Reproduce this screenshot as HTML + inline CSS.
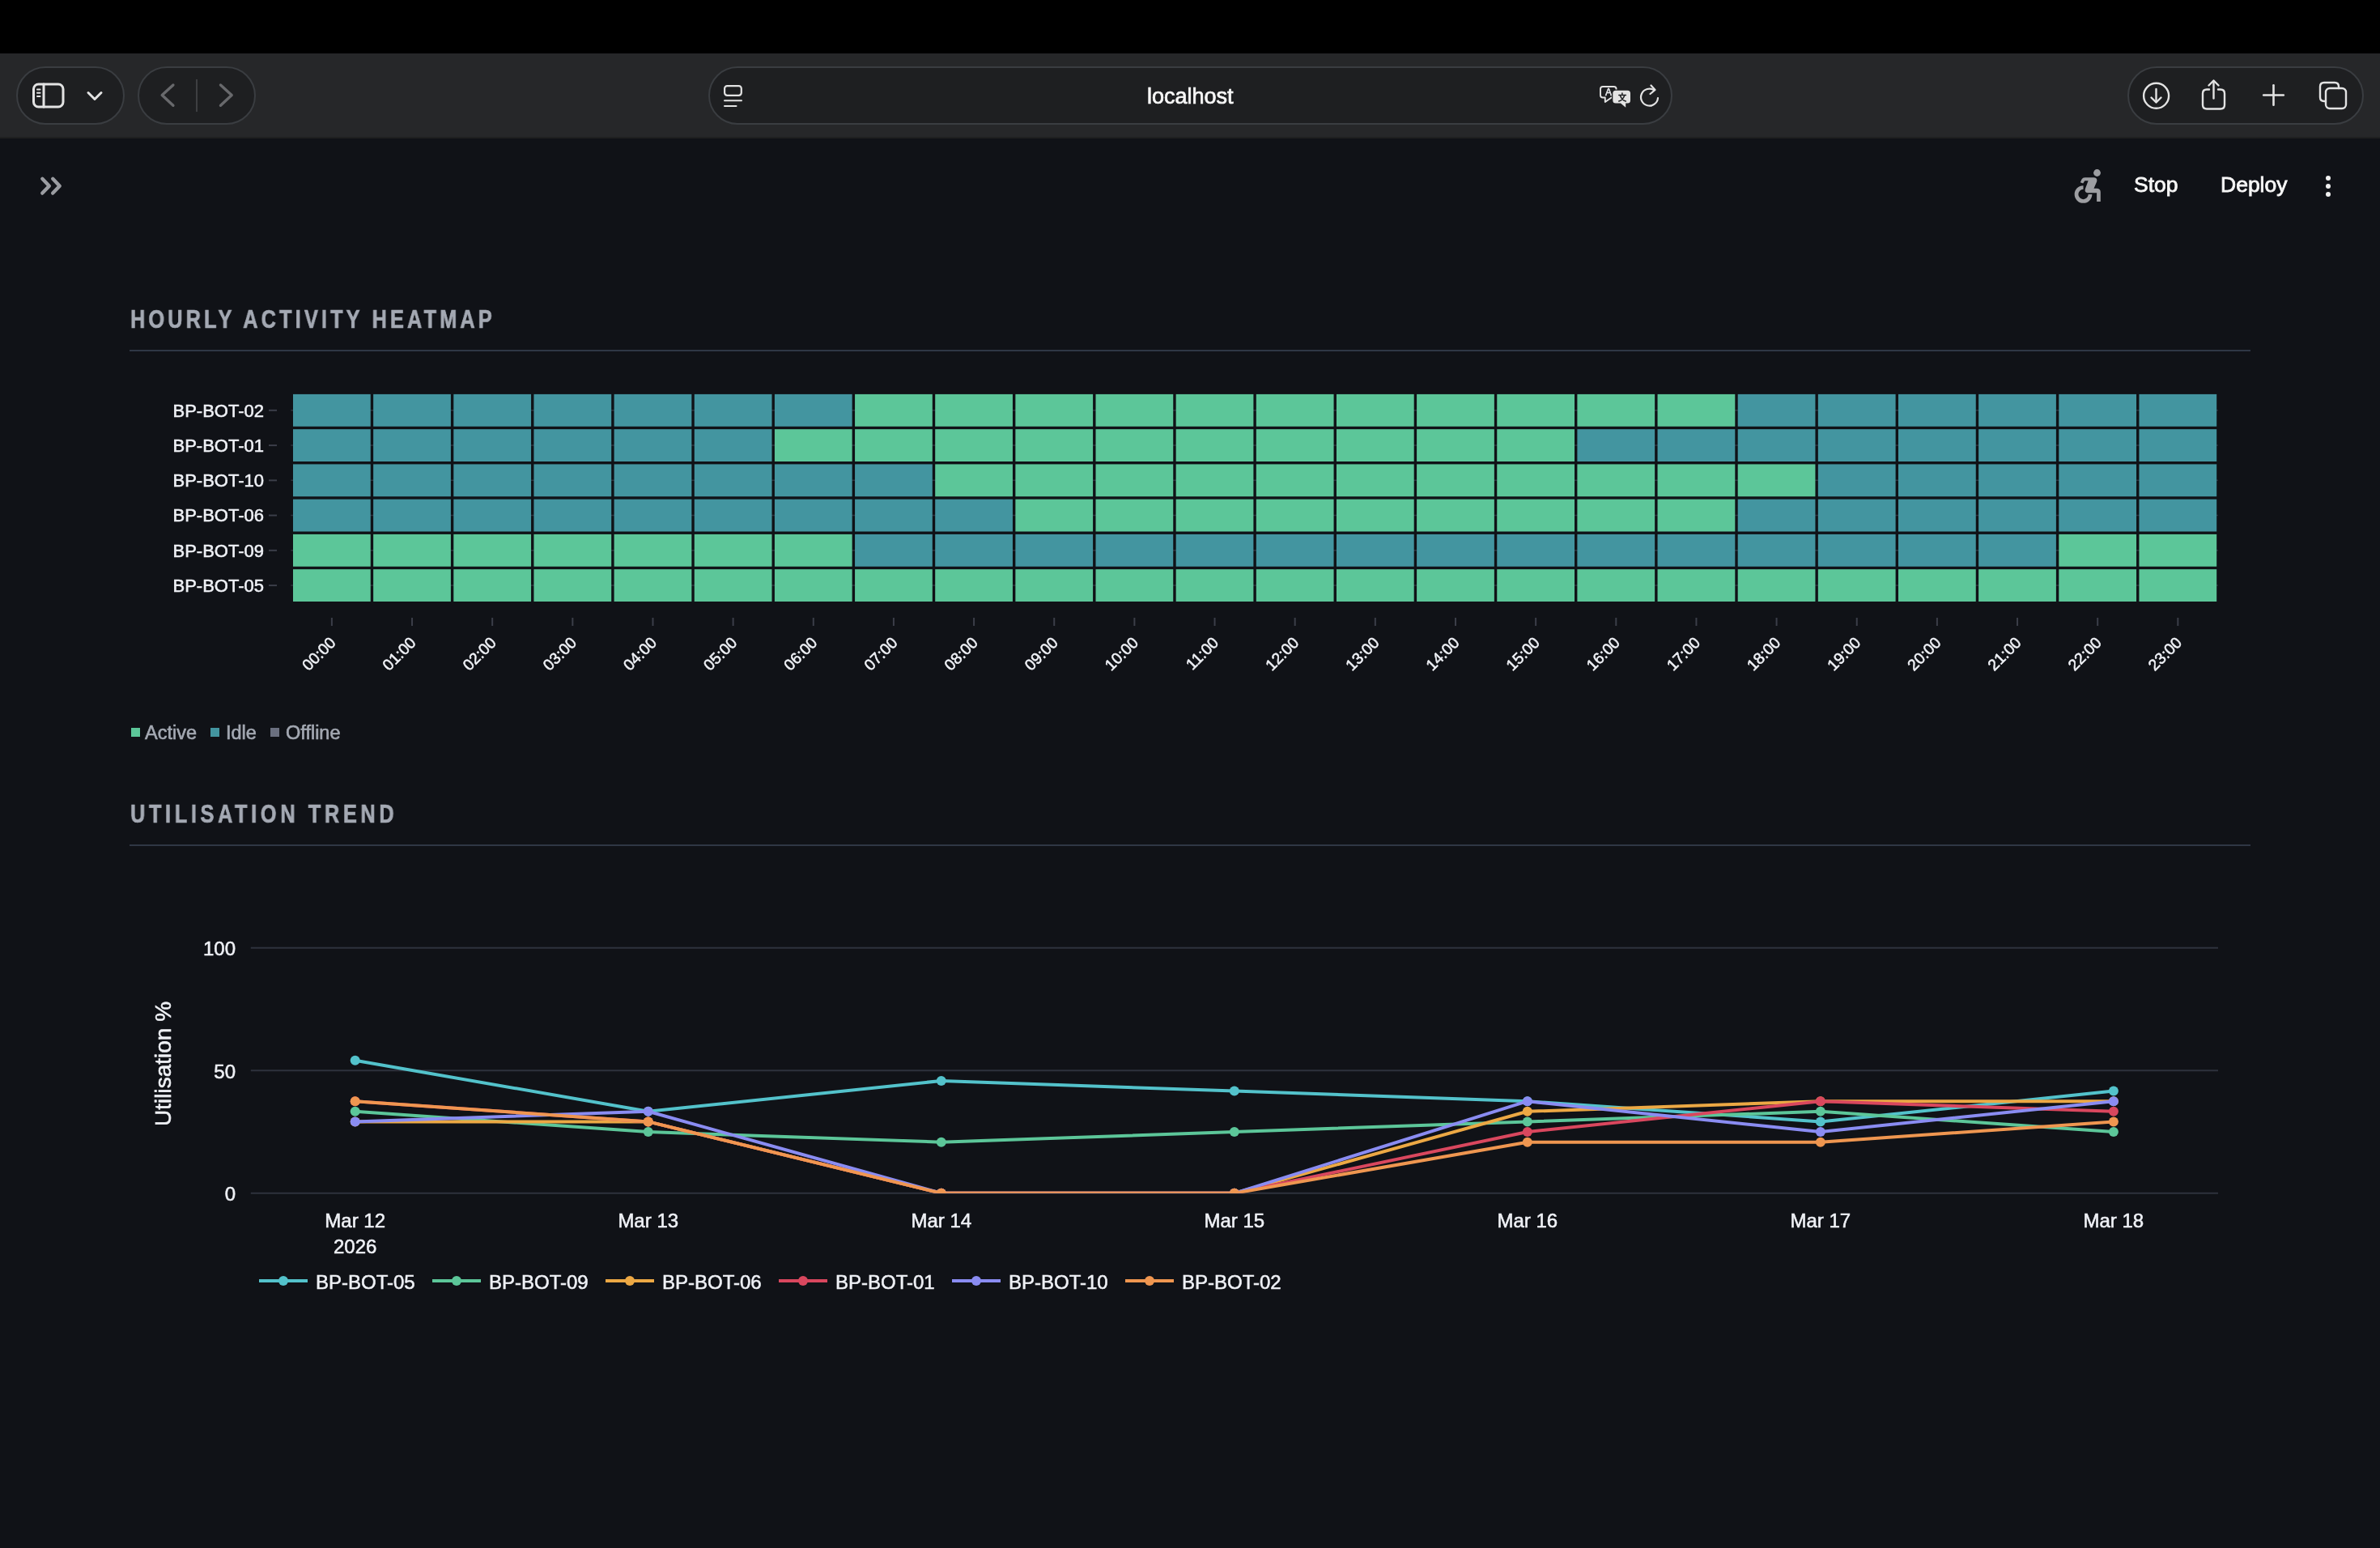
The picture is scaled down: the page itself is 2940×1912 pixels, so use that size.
<!DOCTYPE html><html><head><meta charset="utf-8"><style>
html,body{margin:0;padding:0;width:2940px;height:1912px;overflow:hidden;background:#101217;font-family:"Liberation Sans", sans-serif;}
.abs{position:absolute;will-change:transform;}
.t{position:absolute;white-space:nowrap;line-height:1;will-change:transform;} svg text{stroke:#eff1f6;stroke-width:0.55px;}
</style></head><body>
<div class="abs" style="left:0;top:0;width:2940px;height:66px;background:#000"></div>
<div class="abs" style="left:0;top:66px;width:2940px;height:104px;background:#262729"></div>
<div class="abs" style="left:0;top:168.5px;width:2940px;height:1.5px;background:#1f2021"></div>
<div class="abs" style="left:19.5px;top:81.8px;width:134.0px;height:72.0px;border-radius:36px;background:#1e1f21;box-sizing:border-box;border:2px solid #3a3d41"></div>
<div class="abs" style="left:169.5px;top:81.8px;width:146.0px;height:72.0px;border-radius:36px;background:#1e1f21;box-sizing:border-box;border:2px solid #3a3d41"></div>
<div class="abs" style="left:875.0px;top:81.8px;width:1190.5px;height:72.0px;border-radius:36px;background:#1e1f21;box-sizing:border-box;border:2px solid #3a3d41"></div>
<div class="abs" style="left:2627.8px;top:81.8px;width:292.2px;height:72.0px;border-radius:36px;background:#1e1f21;box-sizing:border-box;border:2px solid #3a3d41"></div>
<svg class="abs" style="left:0;top:0" width="2940" height="170" viewBox="0 0 2940 170" fill="none" stroke-linecap="round" stroke-linejoin="round"><rect x="41.5" y="104" width="36.5" height="28" rx="6" stroke="#e3e3e3" stroke-width="3"/><line x1="54" y1="104" x2="54" y2="132" stroke="#e3e3e3" stroke-width="3"/><line x1="46" y1="110.5" x2="49.5" y2="110.5" stroke="#e3e3e3" stroke-width="2"/><line x1="46" y1="114.7" x2="49.5" y2="114.7" stroke="#e3e3e3" stroke-width="2"/><line x1="46" y1="118.9" x2="49.5" y2="118.9" stroke="#e3e3e3" stroke-width="2"/><polyline points="109,114.5 117,122.5 125,114.5" stroke="#e3e3e3" stroke-width="3"/><polyline points="213.9,105 200.2,117.6 213.9,130.3" stroke="#68696c" stroke-width="3.4"/><line x1="243" y1="98.5" x2="243" y2="137.5" stroke="#4a4b4e" stroke-width="1.5"/><polyline points="272.5,105 286.2,117.6 272.5,130.3" stroke="#68696c" stroke-width="3.4"/><rect x="895.1" y="106.1" width="20.7" height="11.7" rx="3.2" stroke="#e3e3e3" stroke-width="2.2"/><line x1="895" y1="124.3" x2="916" y2="124.3" stroke="#e3e3e3" stroke-width="2"/><line x1="895" y1="131" x2="909.5" y2="131" stroke="#e3e3e3" stroke-width="2"/><path d="M1980 107 h13.6 q3 0 3 3 v7.5 q0 3-3 3 h-3 l-7.8 5.5 v-5.5 h-2.8 q-3 0-3-3 v-7.5 q0-3 3-3 z" stroke="#e3e3e3" stroke-width="1.9"/><text x="1983" y="118.2" font-family='Liberation Sans' font-size="12" fill="#e3e3e3" stroke="none">A</text><path d="M1995.8 111.8 h14.7 q3.5 0 3.5 3.5 v8.6 q0 3.5-3.5 3.5 h-2.3 v5.4 l-6.2-5.4 h-6.2 q-3.5 0-3.5-3.5 v-8.6 q0-3.5 3.5-3.5 z" fill="#e3e3e3" stroke="#1e1f21" stroke-width="2.6" style="paint-order:stroke"/><path d="M1999.8 117.6 h8.6 M2003.9 114.9 v1.6 M2001.5 118.2 q1.8 5.2 6.8 6.8 M2006.6 118.2 q-1.8 5.2-6.8 6.8" stroke="#1e1f21" stroke-width="1.5"/><path d="M2048 121 a10.5 10.5 0 1 1 -4.5 -9.5" stroke="#e3e3e3" stroke-width="2.2"/><polyline points="2039.5,105.5 2044.5,111 2038.5,116" stroke="#e3e3e3" stroke-width="2.2"/><circle cx="2663.6" cy="118.3" r="15.5" stroke="#e3e3e3" stroke-width="2.4"/><line x1="2663.5" y1="110" x2="2663.5" y2="126" stroke="#e3e3e3" stroke-width="2.4"/><polyline points="2657.5,120.5 2663.5,126.5 2669.5,120.5" stroke="#e3e3e3" stroke-width="2.4"/><path d="M2729 110.5 h-3 q-5 0-5 5 v14 q0 5 5 5 h17 q5 0 5-5 v-14 q0-5-5-5 h-3" stroke="#e3e3e3" stroke-width="2.4"/><line x1="2734.5" y1="100" x2="2734.5" y2="121.5" stroke="#e3e3e3" stroke-width="2.4"/><polyline points="2728.5,105.5 2734.5,99.5 2740.5,105.5" stroke="#e3e3e3" stroke-width="2.4"/><line x1="2808.5" y1="105.2" x2="2808.5" y2="129.8" stroke="#e3e3e3" stroke-width="2.6"/><line x1="2796.2" y1="117.5" x2="2820.8" y2="117.5" stroke="#e3e3e3" stroke-width="2.6"/><path d="M2873 125 h-2 q-5 0-5-5 v-13 q0-5 5-5 h13 q5 0 5 5 v2" stroke="#e3e3e3" stroke-width="2.4"/><rect x="2873" y="109" width="25" height="25" rx="5" stroke="#e3e3e3" stroke-width="2.4"/></svg>
<div class="t" style="left:1417px;top:106px;font-size:27px;color:#f7f7f7;-webkit-text-stroke:0.7px #f7f7f7">localhost</div>
<svg class="abs" style="left:0;top:170px" width="2940" height="100" viewBox="0 170 2940 100" fill="none" stroke-linecap="round" stroke-linejoin="round">
<polyline points="52.3,220.8 60.8,229.7 52.3,238.6" stroke="#9a9ca1" stroke-width="4.4"/>
<polyline points="65.2,220.8 73.7,229.7 65.2,238.6" stroke="#9a9ca1" stroke-width="4.4"/>
<circle cx="2590.5" cy="213.5" r="4.4" fill="#9d9ea2"/>
<path d="M2569.8 225.2 L2571.5 221.5 Q2572.7 219.2 2575.5 219.2 L2586.8 219.2 Q2591.2 219.6 2590.2 224.2 L2586.5 232.8 L2590.8 232.8 Q2594.8 233.3 2594.8 237.5 L2594.8 249 L2590.1 249 L2590.1 238.2 L2578.8 238.2 Q2574.8 237.8 2575.8 233.5 L2579.6 223.2 L2575.3 223.2 L2573.2 226.6 Z" fill="#9d9ea2" stroke="none"/>
<path d="M2573.5 231.5 A8.5 8.5 0 1 0 2582 240" stroke="#9d9ea2" stroke-width="4.7" stroke-linecap="butt"/>
<circle cx="2876" cy="220" r="3" fill="#f0f0f0"/>
<circle cx="2876" cy="230" r="3" fill="#f0f0f0"/>
<circle cx="2876" cy="240" r="3" fill="#f0f0f0"/>
</svg>
<div class="t" style="left:2636px;top:215px;font-size:26.5px;color:#f7f7f7;-webkit-text-stroke:0.8px #f7f7f7">Stop</div>
<div class="t" style="left:2743px;top:215px;font-size:26.5px;color:#f7f7f7;-webkit-text-stroke:0.8px #f7f7f7">Deploy</div>
<div class="t" style="left:161px;top:379px;font-size:30.5px;font-weight:bold;letter-spacing:5px;transform:scaleX(0.83);transform-origin:0 0;-webkit-text-stroke:0.7px #a4a9b3;color:#a4a9b3">HOURLY ACTIVITY HEATMAP</div>
<div class="abs" style="left:160px;top:432px;width:2620px;height:2px;background:#2f3745"></div>
<div class="t" style="left:161px;top:990px;font-size:30.5px;font-weight:bold;letter-spacing:5.6px;transform:scaleX(0.83);transform-origin:0 0;-webkit-text-stroke:0.7px #a4a9b3;color:#a4a9b3">UTILISATION TREND</div>
<div class="abs" style="left:160px;top:1043px;width:2620px;height:2px;background:#2f3745"></div>
<svg class="abs" style="left:0;top:0" width="2940" height="900" viewBox="0 0 2940 900"><line x1="359.3" y1="506.82" x2="2739.9" y2="506.82" stroke="#2e323d" stroke-width="1.5"/><line x1="359.3" y1="550.08" x2="2739.9" y2="550.08" stroke="#2e323d" stroke-width="1.5"/><line x1="359.3" y1="593.33" x2="2739.9" y2="593.33" stroke="#2e323d" stroke-width="1.5"/><line x1="359.3" y1="636.58" x2="2739.9" y2="636.58" stroke="#2e323d" stroke-width="1.5"/><line x1="359.3" y1="679.83" x2="2739.9" y2="679.83" stroke="#2e323d" stroke-width="1.5"/><line x1="359.3" y1="723.08" x2="2739.9" y2="723.08" stroke="#2e323d" stroke-width="1.5"/><rect x="362.00" y="486.90" width="95.75" height="39.85" fill="#4395a0"/><rect x="461.15" y="486.90" width="95.75" height="39.85" fill="#4395a0"/><rect x="560.30" y="486.90" width="95.75" height="39.85" fill="#4395a0"/><rect x="659.45" y="486.90" width="95.75" height="39.85" fill="#4395a0"/><rect x="758.60" y="486.90" width="95.75" height="39.85" fill="#4395a0"/><rect x="857.75" y="486.90" width="95.75" height="39.85" fill="#4395a0"/><rect x="956.90" y="486.90" width="95.75" height="39.85" fill="#4395a0"/><rect x="1056.05" y="486.90" width="95.75" height="39.85" fill="#5cc699"/><rect x="1155.20" y="486.90" width="95.75" height="39.85" fill="#5cc699"/><rect x="1254.35" y="486.90" width="95.75" height="39.85" fill="#5cc699"/><rect x="1353.50" y="486.90" width="95.75" height="39.85" fill="#5cc699"/><rect x="1452.65" y="486.90" width="95.75" height="39.85" fill="#5cc699"/><rect x="1551.80" y="486.90" width="95.75" height="39.85" fill="#5cc699"/><rect x="1650.95" y="486.90" width="95.75" height="39.85" fill="#5cc699"/><rect x="1750.10" y="486.90" width="95.75" height="39.85" fill="#5cc699"/><rect x="1849.25" y="486.90" width="95.75" height="39.85" fill="#5cc699"/><rect x="1948.40" y="486.90" width="95.75" height="39.85" fill="#5cc699"/><rect x="2047.55" y="486.90" width="95.75" height="39.85" fill="#5cc699"/><rect x="2146.70" y="486.90" width="95.75" height="39.85" fill="#4395a0"/><rect x="2245.85" y="486.90" width="95.75" height="39.85" fill="#4395a0"/><rect x="2345.00" y="486.90" width="95.75" height="39.85" fill="#4395a0"/><rect x="2444.15" y="486.90" width="95.75" height="39.85" fill="#4395a0"/><rect x="2543.30" y="486.90" width="95.75" height="39.85" fill="#4395a0"/><rect x="2642.45" y="486.90" width="95.75" height="39.85" fill="#4395a0"/><rect x="362.00" y="530.15" width="95.75" height="39.85" fill="#4395a0"/><rect x="461.15" y="530.15" width="95.75" height="39.85" fill="#4395a0"/><rect x="560.30" y="530.15" width="95.75" height="39.85" fill="#4395a0"/><rect x="659.45" y="530.15" width="95.75" height="39.85" fill="#4395a0"/><rect x="758.60" y="530.15" width="95.75" height="39.85" fill="#4395a0"/><rect x="857.75" y="530.15" width="95.75" height="39.85" fill="#4395a0"/><rect x="956.90" y="530.15" width="95.75" height="39.85" fill="#5cc699"/><rect x="1056.05" y="530.15" width="95.75" height="39.85" fill="#5cc699"/><rect x="1155.20" y="530.15" width="95.75" height="39.85" fill="#5cc699"/><rect x="1254.35" y="530.15" width="95.75" height="39.85" fill="#5cc699"/><rect x="1353.50" y="530.15" width="95.75" height="39.85" fill="#5cc699"/><rect x="1452.65" y="530.15" width="95.75" height="39.85" fill="#5cc699"/><rect x="1551.80" y="530.15" width="95.75" height="39.85" fill="#5cc699"/><rect x="1650.95" y="530.15" width="95.75" height="39.85" fill="#5cc699"/><rect x="1750.10" y="530.15" width="95.75" height="39.85" fill="#5cc699"/><rect x="1849.25" y="530.15" width="95.75" height="39.85" fill="#5cc699"/><rect x="1948.40" y="530.15" width="95.75" height="39.85" fill="#4395a0"/><rect x="2047.55" y="530.15" width="95.75" height="39.85" fill="#4395a0"/><rect x="2146.70" y="530.15" width="95.75" height="39.85" fill="#4395a0"/><rect x="2245.85" y="530.15" width="95.75" height="39.85" fill="#4395a0"/><rect x="2345.00" y="530.15" width="95.75" height="39.85" fill="#4395a0"/><rect x="2444.15" y="530.15" width="95.75" height="39.85" fill="#4395a0"/><rect x="2543.30" y="530.15" width="95.75" height="39.85" fill="#4395a0"/><rect x="2642.45" y="530.15" width="95.75" height="39.85" fill="#4395a0"/><rect x="362.00" y="573.40" width="95.75" height="39.85" fill="#4395a0"/><rect x="461.15" y="573.40" width="95.75" height="39.85" fill="#4395a0"/><rect x="560.30" y="573.40" width="95.75" height="39.85" fill="#4395a0"/><rect x="659.45" y="573.40" width="95.75" height="39.85" fill="#4395a0"/><rect x="758.60" y="573.40" width="95.75" height="39.85" fill="#4395a0"/><rect x="857.75" y="573.40" width="95.75" height="39.85" fill="#4395a0"/><rect x="956.90" y="573.40" width="95.75" height="39.85" fill="#4395a0"/><rect x="1056.05" y="573.40" width="95.75" height="39.85" fill="#4395a0"/><rect x="1155.20" y="573.40" width="95.75" height="39.85" fill="#5cc699"/><rect x="1254.35" y="573.40" width="95.75" height="39.85" fill="#5cc699"/><rect x="1353.50" y="573.40" width="95.75" height="39.85" fill="#5cc699"/><rect x="1452.65" y="573.40" width="95.75" height="39.85" fill="#5cc699"/><rect x="1551.80" y="573.40" width="95.75" height="39.85" fill="#5cc699"/><rect x="1650.95" y="573.40" width="95.75" height="39.85" fill="#5cc699"/><rect x="1750.10" y="573.40" width="95.75" height="39.85" fill="#5cc699"/><rect x="1849.25" y="573.40" width="95.75" height="39.85" fill="#5cc699"/><rect x="1948.40" y="573.40" width="95.75" height="39.85" fill="#5cc699"/><rect x="2047.55" y="573.40" width="95.75" height="39.85" fill="#5cc699"/><rect x="2146.70" y="573.40" width="95.75" height="39.85" fill="#5cc699"/><rect x="2245.85" y="573.40" width="95.75" height="39.85" fill="#4395a0"/><rect x="2345.00" y="573.40" width="95.75" height="39.85" fill="#4395a0"/><rect x="2444.15" y="573.40" width="95.75" height="39.85" fill="#4395a0"/><rect x="2543.30" y="573.40" width="95.75" height="39.85" fill="#4395a0"/><rect x="2642.45" y="573.40" width="95.75" height="39.85" fill="#4395a0"/><rect x="362.00" y="616.65" width="95.75" height="39.85" fill="#4395a0"/><rect x="461.15" y="616.65" width="95.75" height="39.85" fill="#4395a0"/><rect x="560.30" y="616.65" width="95.75" height="39.85" fill="#4395a0"/><rect x="659.45" y="616.65" width="95.75" height="39.85" fill="#4395a0"/><rect x="758.60" y="616.65" width="95.75" height="39.85" fill="#4395a0"/><rect x="857.75" y="616.65" width="95.75" height="39.85" fill="#4395a0"/><rect x="956.90" y="616.65" width="95.75" height="39.85" fill="#4395a0"/><rect x="1056.05" y="616.65" width="95.75" height="39.85" fill="#4395a0"/><rect x="1155.20" y="616.65" width="95.75" height="39.85" fill="#4395a0"/><rect x="1254.35" y="616.65" width="95.75" height="39.85" fill="#5cc699"/><rect x="1353.50" y="616.65" width="95.75" height="39.85" fill="#5cc699"/><rect x="1452.65" y="616.65" width="95.75" height="39.85" fill="#5cc699"/><rect x="1551.80" y="616.65" width="95.75" height="39.85" fill="#5cc699"/><rect x="1650.95" y="616.65" width="95.75" height="39.85" fill="#5cc699"/><rect x="1750.10" y="616.65" width="95.75" height="39.85" fill="#5cc699"/><rect x="1849.25" y="616.65" width="95.75" height="39.85" fill="#5cc699"/><rect x="1948.40" y="616.65" width="95.75" height="39.85" fill="#5cc699"/><rect x="2047.55" y="616.65" width="95.75" height="39.85" fill="#5cc699"/><rect x="2146.70" y="616.65" width="95.75" height="39.85" fill="#4395a0"/><rect x="2245.85" y="616.65" width="95.75" height="39.85" fill="#4395a0"/><rect x="2345.00" y="616.65" width="95.75" height="39.85" fill="#4395a0"/><rect x="2444.15" y="616.65" width="95.75" height="39.85" fill="#4395a0"/><rect x="2543.30" y="616.65" width="95.75" height="39.85" fill="#4395a0"/><rect x="2642.45" y="616.65" width="95.75" height="39.85" fill="#4395a0"/><rect x="362.00" y="659.90" width="95.75" height="39.85" fill="#5cc699"/><rect x="461.15" y="659.90" width="95.75" height="39.85" fill="#5cc699"/><rect x="560.30" y="659.90" width="95.75" height="39.85" fill="#5cc699"/><rect x="659.45" y="659.90" width="95.75" height="39.85" fill="#5cc699"/><rect x="758.60" y="659.90" width="95.75" height="39.85" fill="#5cc699"/><rect x="857.75" y="659.90" width="95.75" height="39.85" fill="#5cc699"/><rect x="956.90" y="659.90" width="95.75" height="39.85" fill="#5cc699"/><rect x="1056.05" y="659.90" width="95.75" height="39.85" fill="#4395a0"/><rect x="1155.20" y="659.90" width="95.75" height="39.85" fill="#4395a0"/><rect x="1254.35" y="659.90" width="95.75" height="39.85" fill="#4395a0"/><rect x="1353.50" y="659.90" width="95.75" height="39.85" fill="#4395a0"/><rect x="1452.65" y="659.90" width="95.75" height="39.85" fill="#4395a0"/><rect x="1551.80" y="659.90" width="95.75" height="39.85" fill="#4395a0"/><rect x="1650.95" y="659.90" width="95.75" height="39.85" fill="#4395a0"/><rect x="1750.10" y="659.90" width="95.75" height="39.85" fill="#4395a0"/><rect x="1849.25" y="659.90" width="95.75" height="39.85" fill="#4395a0"/><rect x="1948.40" y="659.90" width="95.75" height="39.85" fill="#4395a0"/><rect x="2047.55" y="659.90" width="95.75" height="39.85" fill="#4395a0"/><rect x="2146.70" y="659.90" width="95.75" height="39.85" fill="#4395a0"/><rect x="2245.85" y="659.90" width="95.75" height="39.85" fill="#4395a0"/><rect x="2345.00" y="659.90" width="95.75" height="39.85" fill="#4395a0"/><rect x="2444.15" y="659.90" width="95.75" height="39.85" fill="#4395a0"/><rect x="2543.30" y="659.90" width="95.75" height="39.85" fill="#5cc699"/><rect x="2642.45" y="659.90" width="95.75" height="39.85" fill="#5cc699"/><rect x="362.00" y="703.15" width="95.75" height="39.85" fill="#5cc699"/><rect x="461.15" y="703.15" width="95.75" height="39.85" fill="#5cc699"/><rect x="560.30" y="703.15" width="95.75" height="39.85" fill="#5cc699"/><rect x="659.45" y="703.15" width="95.75" height="39.85" fill="#5cc699"/><rect x="758.60" y="703.15" width="95.75" height="39.85" fill="#5cc699"/><rect x="857.75" y="703.15" width="95.75" height="39.85" fill="#5cc699"/><rect x="956.90" y="703.15" width="95.75" height="39.85" fill="#5cc699"/><rect x="1056.05" y="703.15" width="95.75" height="39.85" fill="#5cc699"/><rect x="1155.20" y="703.15" width="95.75" height="39.85" fill="#5cc699"/><rect x="1254.35" y="703.15" width="95.75" height="39.85" fill="#5cc699"/><rect x="1353.50" y="703.15" width="95.75" height="39.85" fill="#5cc699"/><rect x="1452.65" y="703.15" width="95.75" height="39.85" fill="#5cc699"/><rect x="1551.80" y="703.15" width="95.75" height="39.85" fill="#5cc699"/><rect x="1650.95" y="703.15" width="95.75" height="39.85" fill="#5cc699"/><rect x="1750.10" y="703.15" width="95.75" height="39.85" fill="#5cc699"/><rect x="1849.25" y="703.15" width="95.75" height="39.85" fill="#5cc699"/><rect x="1948.40" y="703.15" width="95.75" height="39.85" fill="#5cc699"/><rect x="2047.55" y="703.15" width="95.75" height="39.85" fill="#5cc699"/><rect x="2146.70" y="703.15" width="95.75" height="39.85" fill="#5cc699"/><rect x="2245.85" y="703.15" width="95.75" height="39.85" fill="#5cc699"/><rect x="2345.00" y="703.15" width="95.75" height="39.85" fill="#5cc699"/><rect x="2444.15" y="703.15" width="95.75" height="39.85" fill="#5cc699"/><rect x="2543.30" y="703.15" width="95.75" height="39.85" fill="#5cc699"/><rect x="2642.45" y="703.15" width="95.75" height="39.85" fill="#5cc699"/><line x1="332" y1="506.82" x2="342" y2="506.82" stroke="#3b3e49" stroke-width="2"/><text x="326" y="514.62" text-anchor="end" font-family='Liberation Sans' font-size="22" fill="#eff1f6">BP-BOT-02</text><line x1="332" y1="550.08" x2="342" y2="550.08" stroke="#3b3e49" stroke-width="2"/><text x="326" y="557.88" text-anchor="end" font-family='Liberation Sans' font-size="22" fill="#eff1f6">BP-BOT-01</text><line x1="332" y1="593.33" x2="342" y2="593.33" stroke="#3b3e49" stroke-width="2"/><text x="326" y="601.12" text-anchor="end" font-family='Liberation Sans' font-size="22" fill="#eff1f6">BP-BOT-10</text><line x1="332" y1="636.58" x2="342" y2="636.58" stroke="#3b3e49" stroke-width="2"/><text x="326" y="644.38" text-anchor="end" font-family='Liberation Sans' font-size="22" fill="#eff1f6">BP-BOT-06</text><line x1="332" y1="679.83" x2="342" y2="679.83" stroke="#3b3e49" stroke-width="2"/><text x="326" y="687.62" text-anchor="end" font-family='Liberation Sans' font-size="22" fill="#eff1f6">BP-BOT-09</text><line x1="332" y1="723.08" x2="342" y2="723.08" stroke="#3b3e49" stroke-width="2"/><text x="326" y="730.88" text-anchor="end" font-family='Liberation Sans' font-size="22" fill="#eff1f6">BP-BOT-05</text><line x1="409.88" y1="763" x2="409.88" y2="773" stroke="#3b3e49" stroke-width="2"/><text x="415.88" y="795.00" text-anchor="end" transform="rotate(-45 415.88 795.00)" font-family='Liberation Sans' font-size="19.5" fill="#eff1f6">00:00</text><line x1="509.03" y1="763" x2="509.03" y2="773" stroke="#3b3e49" stroke-width="2"/><text x="515.03" y="795.00" text-anchor="end" transform="rotate(-45 515.03 795.00)" font-family='Liberation Sans' font-size="19.5" fill="#eff1f6">01:00</text><line x1="608.17" y1="763" x2="608.17" y2="773" stroke="#3b3e49" stroke-width="2"/><text x="614.17" y="795.00" text-anchor="end" transform="rotate(-45 614.17 795.00)" font-family='Liberation Sans' font-size="19.5" fill="#eff1f6">02:00</text><line x1="707.33" y1="763" x2="707.33" y2="773" stroke="#3b3e49" stroke-width="2"/><text x="713.33" y="795.00" text-anchor="end" transform="rotate(-45 713.33 795.00)" font-family='Liberation Sans' font-size="19.5" fill="#eff1f6">03:00</text><line x1="806.48" y1="763" x2="806.48" y2="773" stroke="#3b3e49" stroke-width="2"/><text x="812.48" y="795.00" text-anchor="end" transform="rotate(-45 812.48 795.00)" font-family='Liberation Sans' font-size="19.5" fill="#eff1f6">04:00</text><line x1="905.62" y1="763" x2="905.62" y2="773" stroke="#3b3e49" stroke-width="2"/><text x="911.62" y="795.00" text-anchor="end" transform="rotate(-45 911.62 795.00)" font-family='Liberation Sans' font-size="19.5" fill="#eff1f6">05:00</text><line x1="1004.78" y1="763" x2="1004.78" y2="773" stroke="#3b3e49" stroke-width="2"/><text x="1010.78" y="795.00" text-anchor="end" transform="rotate(-45 1010.78 795.00)" font-family='Liberation Sans' font-size="19.5" fill="#eff1f6">06:00</text><line x1="1103.92" y1="763" x2="1103.92" y2="773" stroke="#3b3e49" stroke-width="2"/><text x="1109.92" y="795.00" text-anchor="end" transform="rotate(-45 1109.92 795.00)" font-family='Liberation Sans' font-size="19.5" fill="#eff1f6">07:00</text><line x1="1203.08" y1="763" x2="1203.08" y2="773" stroke="#3b3e49" stroke-width="2"/><text x="1209.08" y="795.00" text-anchor="end" transform="rotate(-45 1209.08 795.00)" font-family='Liberation Sans' font-size="19.5" fill="#eff1f6">08:00</text><line x1="1302.23" y1="763" x2="1302.23" y2="773" stroke="#3b3e49" stroke-width="2"/><text x="1308.23" y="795.00" text-anchor="end" transform="rotate(-45 1308.23 795.00)" font-family='Liberation Sans' font-size="19.5" fill="#eff1f6">09:00</text><line x1="1401.38" y1="763" x2="1401.38" y2="773" stroke="#3b3e49" stroke-width="2"/><text x="1407.38" y="795.00" text-anchor="end" transform="rotate(-45 1407.38 795.00)" font-family='Liberation Sans' font-size="19.5" fill="#eff1f6">10:00</text><line x1="1500.53" y1="763" x2="1500.53" y2="773" stroke="#3b3e49" stroke-width="2"/><text x="1506.53" y="795.00" text-anchor="end" transform="rotate(-45 1506.53 795.00)" font-family='Liberation Sans' font-size="19.5" fill="#eff1f6">11:00</text><line x1="1599.67" y1="763" x2="1599.67" y2="773" stroke="#3b3e49" stroke-width="2"/><text x="1605.67" y="795.00" text-anchor="end" transform="rotate(-45 1605.67 795.00)" font-family='Liberation Sans' font-size="19.5" fill="#eff1f6">12:00</text><line x1="1698.83" y1="763" x2="1698.83" y2="773" stroke="#3b3e49" stroke-width="2"/><text x="1704.83" y="795.00" text-anchor="end" transform="rotate(-45 1704.83 795.00)" font-family='Liberation Sans' font-size="19.5" fill="#eff1f6">13:00</text><line x1="1797.98" y1="763" x2="1797.98" y2="773" stroke="#3b3e49" stroke-width="2"/><text x="1803.98" y="795.00" text-anchor="end" transform="rotate(-45 1803.98 795.00)" font-family='Liberation Sans' font-size="19.5" fill="#eff1f6">14:00</text><line x1="1897.12" y1="763" x2="1897.12" y2="773" stroke="#3b3e49" stroke-width="2"/><text x="1903.12" y="795.00" text-anchor="end" transform="rotate(-45 1903.12 795.00)" font-family='Liberation Sans' font-size="19.5" fill="#eff1f6">15:00</text><line x1="1996.28" y1="763" x2="1996.28" y2="773" stroke="#3b3e49" stroke-width="2"/><text x="2002.28" y="795.00" text-anchor="end" transform="rotate(-45 2002.28 795.00)" font-family='Liberation Sans' font-size="19.5" fill="#eff1f6">16:00</text><line x1="2095.43" y1="763" x2="2095.43" y2="773" stroke="#3b3e49" stroke-width="2"/><text x="2101.43" y="795.00" text-anchor="end" transform="rotate(-45 2101.43 795.00)" font-family='Liberation Sans' font-size="19.5" fill="#eff1f6">17:00</text><line x1="2194.58" y1="763" x2="2194.58" y2="773" stroke="#3b3e49" stroke-width="2"/><text x="2200.58" y="795.00" text-anchor="end" transform="rotate(-45 2200.58 795.00)" font-family='Liberation Sans' font-size="19.5" fill="#eff1f6">18:00</text><line x1="2293.73" y1="763" x2="2293.73" y2="773" stroke="#3b3e49" stroke-width="2"/><text x="2299.73" y="795.00" text-anchor="end" transform="rotate(-45 2299.73 795.00)" font-family='Liberation Sans' font-size="19.5" fill="#eff1f6">19:00</text><line x1="2392.88" y1="763" x2="2392.88" y2="773" stroke="#3b3e49" stroke-width="2"/><text x="2398.88" y="795.00" text-anchor="end" transform="rotate(-45 2398.88 795.00)" font-family='Liberation Sans' font-size="19.5" fill="#eff1f6">20:00</text><line x1="2492.03" y1="763" x2="2492.03" y2="773" stroke="#3b3e49" stroke-width="2"/><text x="2498.03" y="795.00" text-anchor="end" transform="rotate(-45 2498.03 795.00)" font-family='Liberation Sans' font-size="19.5" fill="#eff1f6">21:00</text><line x1="2591.18" y1="763" x2="2591.18" y2="773" stroke="#3b3e49" stroke-width="2"/><text x="2597.18" y="795.00" text-anchor="end" transform="rotate(-45 2597.18 795.00)" font-family='Liberation Sans' font-size="19.5" fill="#eff1f6">22:00</text><line x1="2690.33" y1="763" x2="2690.33" y2="773" stroke="#3b3e49" stroke-width="2"/><text x="2696.33" y="795.00" text-anchor="end" transform="rotate(-45 2696.33 795.00)" font-family='Liberation Sans' font-size="19.5" fill="#eff1f6">23:00</text></svg>
<div class="abs" style="left:162px;top:899px;width:11px;height:11px;background:#5cc699"></div>
<div class="abs" style="left:260px;top:899px;width:11px;height:11px;background:#4395a0"></div>
<div class="abs" style="left:334px;top:899px;width:11px;height:11px;background:#6b7080"></div>
<div class="t" style="left:179px;top:894px;font-size:23.5px;-webkit-text-stroke:0.6px #a4a9b3;color:#a4a9b3">Active</div>
<div class="t" style="left:279px;top:894px;font-size:23.5px;-webkit-text-stroke:0.6px #a4a9b3;color:#a4a9b3">Idle</div>
<div class="t" style="left:353px;top:894px;font-size:23.5px;-webkit-text-stroke:0.6px #a4a9b3;color:#a4a9b3">Offline</div>
<svg class="abs" style="left:0;top:0" width="2940" height="1912" viewBox="0 0 2940 1912"><defs><clipPath id="pc"><rect x="309.8" y="1100" width="2430.2" height="373.8"/></clipPath></defs><line x1="309.8" y1="1473.80" x2="2740" y2="1473.80" stroke="#2e323d" stroke-width="2"/><text x="291" y="1483.30" text-anchor="end" font-family='Liberation Sans' font-size="24" fill="#eff1f6">0</text><line x1="309.8" y1="1322.30" x2="2740" y2="1322.30" stroke="#2e323d" stroke-width="2"/><text x="291" y="1331.80" text-anchor="end" font-family='Liberation Sans' font-size="24" fill="#eff1f6">50</text><line x1="309.8" y1="1170.80" x2="2740" y2="1170.80" stroke="#2e323d" stroke-width="2"/><text x="291" y="1180.30" text-anchor="end" font-family='Liberation Sans' font-size="24" fill="#eff1f6">100</text><g clip-path="url(#pc)"><polyline points="438.70,1309.67 800.73,1372.80 1162.76,1334.92 1524.79,1347.55 1886.82,1360.17 2248.85,1385.42 2610.88,1347.55" fill="none" stroke="#53c2cb" stroke-width="4" stroke-linejoin="round"/><circle cx="438.70" cy="1309.67" r="6" fill="#53c2cb"/><circle cx="800.73" cy="1372.80" r="6" fill="#53c2cb"/><circle cx="1162.76" cy="1334.92" r="6" fill="#53c2cb"/><circle cx="1524.79" cy="1347.55" r="6" fill="#53c2cb"/><circle cx="1886.82" cy="1360.17" r="6" fill="#53c2cb"/><circle cx="2248.85" cy="1385.42" r="6" fill="#53c2cb"/><circle cx="2610.88" cy="1347.55" r="6" fill="#53c2cb"/><polyline points="438.70,1372.80 800.73,1398.05 1162.76,1410.67 1524.79,1398.05 1886.82,1385.42 2248.85,1372.80 2610.88,1398.05" fill="none" stroke="#5cc699" stroke-width="4" stroke-linejoin="round"/><circle cx="438.70" cy="1372.80" r="6" fill="#5cc699"/><circle cx="800.73" cy="1398.05" r="6" fill="#5cc699"/><circle cx="1162.76" cy="1410.67" r="6" fill="#5cc699"/><circle cx="1524.79" cy="1398.05" r="6" fill="#5cc699"/><circle cx="1886.82" cy="1385.42" r="6" fill="#5cc699"/><circle cx="2248.85" cy="1372.80" r="6" fill="#5cc699"/><circle cx="2610.88" cy="1398.05" r="6" fill="#5cc699"/><polyline points="438.70,1385.42 800.73,1385.42 1162.76,1473.80 1524.79,1473.80 1886.82,1372.80 2248.85,1360.17 2610.88,1360.17" fill="none" stroke="#eca844" stroke-width="4" stroke-linejoin="round"/><circle cx="438.70" cy="1385.42" r="6" fill="#eca844"/><circle cx="800.73" cy="1385.42" r="6" fill="#eca844"/><circle cx="1162.76" cy="1473.80" r="6" fill="#eca844"/><circle cx="1524.79" cy="1473.80" r="6" fill="#eca844"/><circle cx="1886.82" cy="1372.80" r="6" fill="#eca844"/><circle cx="2248.85" cy="1360.17" r="6" fill="#eca844"/><circle cx="2610.88" cy="1360.17" r="6" fill="#eca844"/><polyline points="438.70,1360.17 800.73,1385.42 1162.76,1473.80 1524.79,1473.80 1886.82,1398.05 2248.85,1360.17 2610.88,1372.80" fill="none" stroke="#d9475e" stroke-width="4" stroke-linejoin="round"/><circle cx="438.70" cy="1360.17" r="6" fill="#d9475e"/><circle cx="800.73" cy="1385.42" r="6" fill="#d9475e"/><circle cx="1162.76" cy="1473.80" r="6" fill="#d9475e"/><circle cx="1524.79" cy="1473.80" r="6" fill="#d9475e"/><circle cx="1886.82" cy="1398.05" r="6" fill="#d9475e"/><circle cx="2248.85" cy="1360.17" r="6" fill="#d9475e"/><circle cx="2610.88" cy="1372.80" r="6" fill="#d9475e"/><polyline points="438.70,1385.42 800.73,1372.80 1162.76,1473.80 1524.79,1473.80 1886.82,1360.17 2248.85,1398.05 2610.88,1360.17" fill="none" stroke="#8a8cf2" stroke-width="4" stroke-linejoin="round"/><circle cx="438.70" cy="1385.42" r="6" fill="#8a8cf2"/><circle cx="800.73" cy="1372.80" r="6" fill="#8a8cf2"/><circle cx="1162.76" cy="1473.80" r="6" fill="#8a8cf2"/><circle cx="1524.79" cy="1473.80" r="6" fill="#8a8cf2"/><circle cx="1886.82" cy="1360.17" r="6" fill="#8a8cf2"/><circle cx="2248.85" cy="1398.05" r="6" fill="#8a8cf2"/><circle cx="2610.88" cy="1360.17" r="6" fill="#8a8cf2"/><polyline points="438.70,1360.17 800.73,1385.42 1162.76,1473.80 1524.79,1473.80 1886.82,1410.67 2248.85,1410.67 2610.88,1385.42" fill="none" stroke="#ef9650" stroke-width="4" stroke-linejoin="round"/><circle cx="438.70" cy="1360.17" r="6" fill="#ef9650"/><circle cx="800.73" cy="1385.42" r="6" fill="#ef9650"/><circle cx="1162.76" cy="1473.80" r="6" fill="#ef9650"/><circle cx="1524.79" cy="1473.80" r="6" fill="#ef9650"/><circle cx="1886.82" cy="1410.67" r="6" fill="#ef9650"/><circle cx="2248.85" cy="1410.67" r="6" fill="#ef9650"/><circle cx="2610.88" cy="1385.42" r="6" fill="#ef9650"/></g><text x="438.70" y="1516" text-anchor="middle" font-family='Liberation Sans' font-size="24" fill="#eff1f6">Mar 12</text><text x="800.73" y="1516" text-anchor="middle" font-family='Liberation Sans' font-size="24" fill="#eff1f6">Mar 13</text><text x="1162.76" y="1516" text-anchor="middle" font-family='Liberation Sans' font-size="24" fill="#eff1f6">Mar 14</text><text x="1524.79" y="1516" text-anchor="middle" font-family='Liberation Sans' font-size="24" fill="#eff1f6">Mar 15</text><text x="1886.82" y="1516" text-anchor="middle" font-family='Liberation Sans' font-size="24" fill="#eff1f6">Mar 16</text><text x="2248.85" y="1516" text-anchor="middle" font-family='Liberation Sans' font-size="24" fill="#eff1f6">Mar 17</text><text x="2610.88" y="1516" text-anchor="middle" font-family='Liberation Sans' font-size="24" fill="#eff1f6">Mar 18</text><text x="438.70" y="1548" text-anchor="middle" font-family='Liberation Sans' font-size="24" fill="#eff1f6">2026</text><text x="210.5" y="1314" text-anchor="middle" transform="rotate(-90 210.5 1314)" font-family='Liberation Sans' font-size="28" fill="#eff1f6">Utilisation %</text><line x1="320.0" y1="1582" x2="380.0" y2="1582" stroke="#53c2cb" stroke-width="4"/><circle cx="350.0" cy="1582" r="6" fill="#53c2cb"/><text x="390.0" y="1592" font-family='Liberation Sans' font-size="24" fill="#eff1f6">BP-BOT-05</text><line x1="534.0" y1="1582" x2="594.0" y2="1582" stroke="#5cc699" stroke-width="4"/><circle cx="564.0" cy="1582" r="6" fill="#5cc699"/><text x="604.0" y="1592" font-family='Liberation Sans' font-size="24" fill="#eff1f6">BP-BOT-09</text><line x1="748.0" y1="1582" x2="808.0" y2="1582" stroke="#eca844" stroke-width="4"/><circle cx="778.0" cy="1582" r="6" fill="#eca844"/><text x="818.0" y="1592" font-family='Liberation Sans' font-size="24" fill="#eff1f6">BP-BOT-06</text><line x1="962.0" y1="1582" x2="1022.0" y2="1582" stroke="#d9475e" stroke-width="4"/><circle cx="992.0" cy="1582" r="6" fill="#d9475e"/><text x="1032.0" y="1592" font-family='Liberation Sans' font-size="24" fill="#eff1f6">BP-BOT-01</text><line x1="1176.0" y1="1582" x2="1236.0" y2="1582" stroke="#8a8cf2" stroke-width="4"/><circle cx="1206.0" cy="1582" r="6" fill="#8a8cf2"/><text x="1246.0" y="1592" font-family='Liberation Sans' font-size="24" fill="#eff1f6">BP-BOT-10</text><line x1="1390.0" y1="1582" x2="1450.0" y2="1582" stroke="#ef9650" stroke-width="4"/><circle cx="1420.0" cy="1582" r="6" fill="#ef9650"/><text x="1460.0" y="1592" font-family='Liberation Sans' font-size="24" fill="#eff1f6">BP-BOT-02</text></svg>
</body></html>
